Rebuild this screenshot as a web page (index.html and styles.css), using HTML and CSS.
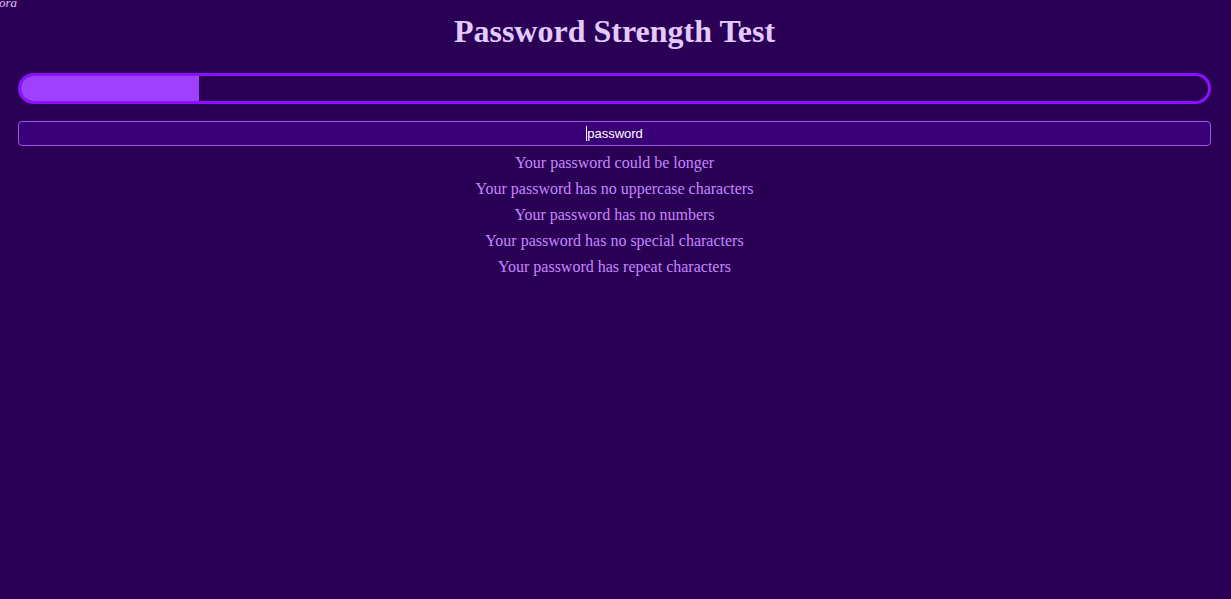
FILE: index.html
```html
<!DOCTYPE html>
<html>
<head>
<meta charset="utf-8">
<link rel="stylesheet" href="styles.css">
</head>
<body>
<span class="brand">ora</span>
<main class="app">
  <h1 class="title">Password Strength Test</h1>
  <div class="meter"><div class="meter-fill" style="width: 15%"></div></div>
  <div class="field"><span class="caret"></span>password</div>
  <ul class="reasons">
    <li>Your password could be longer</li>
    <li>Your password has no uppercase characters</li>
    <li>Your password has no numbers</li>
    <li>Your password has no special characters</li>
    <li>Your password has repeat characters</li>
  </ul>
</main>
</body>
</html>
```
FILE: styles.css
```css
html, body {
  margin: 0;
  padding: 0;
  background: #2a0054;
  height: 100%;
}
body {
  font-family: "Liberation Serif", "Times New Roman", serif;
  position: relative;
}
.brand {
  position: absolute;
  left: -1px;
  top: -5px;
  font-style: italic;
  font-size: 13px;
  color: #e0c0ff;
}
.app {
  padding: 0 20px 0 18px;
  display: flex;
  flex-direction: column;
}
.title {
  margin: 14px 0 0;
  font-size: 32px;
  text-align: center;
  color: #e2caff;
  line-height: 35px;
}
.meter {
  margin-top: 24px;
  height: 25px;
  border: 3px solid #8c10ff;
  border-radius: 16px;
  overflow: hidden;
  display: flex;
}
.meter-fill {
  background: #a040ff;
  height: 100%;
}
.field {
  margin-top: 17px;
  height: 23px;
  border: 1px solid #a050f0;
  border-radius: 4px;
  background: #3a0078;
  color: #ffffff;
  font-family: "Liberation Sans", Arial, sans-serif;
  font-size: 13px;
  display: flex;
  align-items: center;
  justify-content: center;
}
.caret {
  display: inline-block;
  width: 1px;
  height: 15px;
  background: #ffffff;
}
.reasons {
  list-style: none;
  margin: 4px 0 0;
  padding: 0;
  text-align: center;
  color: #c688ff;
  font-size: 16px;
}
.reasons li {
  line-height: 26px;
}
```
